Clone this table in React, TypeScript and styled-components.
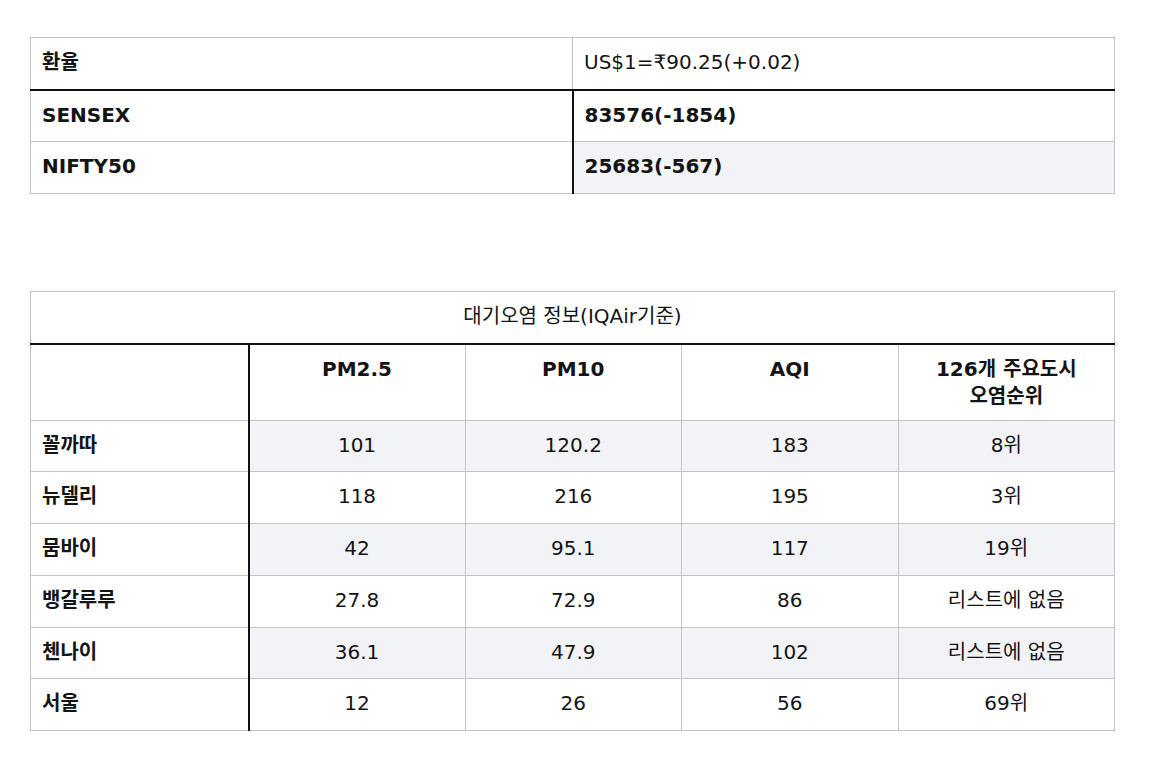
import styled, { createGlobalStyle } from 'styled-components';

const GlobalStyle = createGlobalStyle`
  html, body {
    margin: 0;
    padding: 0;
    background: #ffffff;
  }
  body {
    font-family: "DejaVu Sans", "Noto Sans CJK KR", sans-serif;
    color: #141414;
  }
`;

const Page = styled.div`
  width: 1160px;
  height: 760px;
  padding: 37px 0 0 30px;
  box-sizing: border-box;
  display: flex;
  flex-direction: column;
  gap: 97px;
`;

const Table = styled.table`
  width: 1085px;
  border-collapse: collapse;
  table-layout: fixed;
  font-size: 20px;
  line-height: 27px;
`;

type CellProps = {
  $bold?: boolean;
  $center?: boolean;
  $shade?: boolean;
  $thickLeft?: boolean;
  $thickBottom?: boolean;
};

const Cell = styled.td<CellProps>`
  border: 1px solid #c4c4c4;
  padding: 11px 11px 12.7px;
  vertical-align: top;
  text-align: ${(p) => (p.$center ? 'center' : 'left')};
  font-weight: ${(p) => (p.$bold ? 700 : 400)};
  background: ${(p) => (p.$shade ? '#f2f3f7' : '#ffffff')};
  ${(p) => p.$thickLeft && 'border-left: 2px solid #111;'}
  ${(p) => p.$thickBottom && 'border-bottom: 2px solid #111;'}
`;

const HeadCell = styled(Cell)`
  padding-bottom: 10px;
`;

const Label = styled(Cell).attrs({ $bold: true })``;

type MarketRow = { name: string; value: string; bold: boolean };

const market: MarketRow[] = [
  { name: '환율', value: 'US$1=₹90.25(+0.02)', bold: false },
  { name: 'SENSEX', value: '83576(-1854)', bold: true },
  { name: 'NIFTY50', value: '25683(-567)', bold: true },
];

type AirRow = { city: string; pm25: string; pm10: string; aqi: string; rank: string };

const air: AirRow[] = [
  { city: '꼴까따', pm25: '101', pm10: '120.2', aqi: '183', rank: '8위' },
  { city: '뉴델리', pm25: '118', pm10: '216', aqi: '195', rank: '3위' },
  { city: '뭄바이', pm25: '42', pm10: '95.1', aqi: '117', rank: '19위' },
  { city: '뱅갈루루', pm25: '27.8', pm10: '72.9', aqi: '86', rank: '리스트에 없음' },
  { city: '첸나이', pm25: '36.1', pm10: '47.9', aqi: '102', rank: '리스트에 없음' },
  { city: '서울', pm25: '12', pm10: '26', aqi: '56', rank: '69위' },
];

const App = () => {
  return (
    <>
      <GlobalStyle />
      <Page>
        <Table>
          <colgroup>
            <col style={{ width: 542 }} />
            <col />
          </colgroup>
          <tbody>
            {market.map((row, i) => (
              <tr key={row.name}>
                <Label $thickBottom={i === 0}>{row.name}</Label>
                <Cell
                  $bold={row.bold}
                  $shade={i === 2}
                  $thickLeft={i > 0}
                  $thickBottom={i === 0}
                >
                  {row.value}
                </Cell>
              </tr>
            ))}
          </tbody>
        </Table>

        <Table>
          <colgroup>
            <col style={{ width: 218 }} />
            <col />
            <col />
            <col />
            <col />
          </colgroup>
          <tbody>
            <tr>
              <Cell colSpan={5} $center $thickBottom>
                대기오염 정보(IQAir기준)
              </Cell>
            </tr>
            <tr>
              <HeadCell />
              <HeadCell $bold $center $thickLeft>PM2.5</HeadCell>
              <HeadCell $bold $center>PM10</HeadCell>
              <HeadCell $bold $center>AQI</HeadCell>
              <HeadCell $bold $center>
                126개 주요도시
                <br />
                오염순위
              </HeadCell>
            </tr>
            {air.map((row, i) => {
              const shade = i % 2 === 0;
              return (
                <tr key={row.city}>
                  <Label>{row.city}</Label>
                  <Cell $center $shade={shade} $thickLeft>{row.pm25}</Cell>
                  <Cell $center $shade={shade}>{row.pm10}</Cell>
                  <Cell $center $shade={shade}>{row.aqi}</Cell>
                  <Cell $center $shade={shade}>{row.rank}</Cell>
                </tr>
              );
            })}
          </tbody>
        </Table>
      </Page>
    </>
  );
};

export default App;
